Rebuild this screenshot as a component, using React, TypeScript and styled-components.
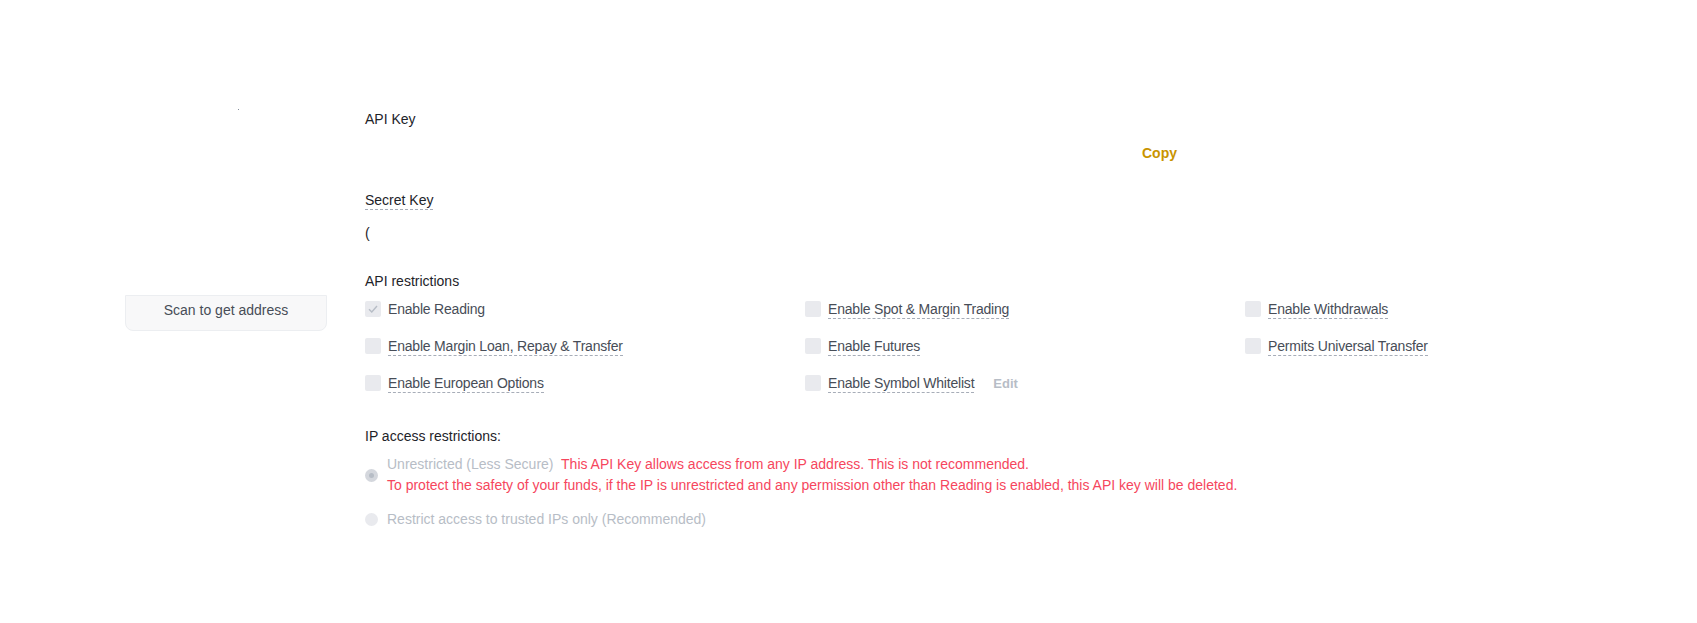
import styled, { createGlobalStyle } from "styled-components";

const GlobalStyle = createGlobalStyle`
    body {
        margin: 0;
        background: #ffffff;
        font-family: "Liberation Sans", Arial, sans-serif;
        color: #1E2329;
    }
`;

const Page = styled.div`
    display: flex;
    align-items: flex-start;
    gap: 38px;
    padding-left: 125px;
    width: 1697px;
    height: 623px;
    box-sizing: border-box;
`;

const Side = styled.aside`
    width: 202px;
    padding-top: 109px;
    display: flex;
    flex-direction: column;
    align-items: center;
`;

const QrDot = styled.div`
    width: 1px;
    height: 1px;
    background: #848E9C;
    margin-left: 24px;
`;

const ScanButton = styled.button`
    margin-top: 185px;
    width: 202px;
    height: 36px;
    padding: 0 0 6px;
    background: #F8F8F9;
    border: 1px solid #ECEEF1;
    border-radius: 0 0 8px 8px;
    color: #474D57;
    font-family: inherit;
    font-size: 14px;
    cursor: pointer;
`;

const Main = styled.main`
    padding-top: 109px;
    display: flex;
    flex-direction: column;
`;

const Label = styled.div<{ $top?: number }>`
    font-size: 14px;
    line-height: 20px;
    color: #1E2329;
    margin-top: ${(p) => p.$top ?? 0}px;
`;

const DashedLabel = styled.span`
    display: inline-block;
    line-height: 18px;
    border-bottom: 1px dashed #A7ADB8;
`;

const KeyRow = styled.div`
    width: 812px;
    height: 24px;
    margin-top: 12px;
    display: flex;
    align-items: center;
    justify-content: space-between;
`;

const KeyValue = styled.div`
    font-size: 14px;
    color: #1E2329;
`;

const CopyButton = styled.button`
    background: none;
    border: none;
    padding: 0;
    color: #C99400;
    font-family: inherit;
    font-size: 14px;
    font-weight: 600;
    cursor: pointer;
`;

const SecretValue = styled.div`
    font-size: 14px;
    line-height: 20px;
    margin-top: 13px;
    color: #1E2329;
`;

const PermGrid = styled.div`
    margin-top: 8px;
    display: grid;
    grid-template-columns: repeat(3, 440px);
    grid-auto-rows: 20px;
    row-gap: 17px;
`;

const Perm = styled.label`
    display: flex;
    align-items: center;
    gap: 7px;
    font-size: 14px;
    color: #474D57;
`;

const Box = styled.span`
    width: 16px;
    height: 16px;
    border-radius: 2px;
    background: #E9EAEE;
    display: flex;
    align-items: center;
    justify-content: center;
    flex-shrink: 0;
`;

const PermText = styled.span<{ $dashed?: boolean }>`
    display: inline-block;
    line-height: 18px;
    letter-spacing: -0.2px;
    border-bottom: 1px dashed ${(p) => (p.$dashed ? "#A7ADB8" : "transparent")};
`;

const Edit = styled.span`
    margin-left: 12px;
    color: #B7BDC6;
    font-size: 13px;
    font-weight: 600;
`;

const RadioRow = styled.div<{ $top: number }>`
    display: flex;
    align-items: center;
    gap: 9px;
    margin-top: ${(p) => p.$top}px;
`;

const Radio = styled.span<{ $selected?: boolean }>`
    width: 13px;
    height: 13px;
    border-radius: 50%;
    background: ${(p) => (p.$selected ? "#D4D7DD" : "#E9EAEE")};
    display: flex;
    align-items: center;
    justify-content: center;
    flex-shrink: 0;
    &::after {
        content: "";
        width: 5px;
        height: 5px;
        border-radius: 50%;
        background: ${(p) => (p.$selected ? "#B7BDC6" : "transparent")};
    }
`;

const RadioText = styled.div`
    font-size: 14px;
    line-height: 21px;
    color: #B7BDC6;
`;

const Warning = styled.span`
    color: #F6465D;
`;

const perms = [
    { text: "Enable Reading", checked: true },
    { text: "Enable Spot & Margin Trading", dashed: true },
    { text: "Enable Withdrawals", dashed: true },
    { text: "Enable Margin Loan, Repay & Transfer", dashed: true },
    { text: "Enable Futures", dashed: true },
    { text: "Permits Universal Transfer", dashed: true },
    { text: "Enable European Options", dashed: true },
    { text: "Enable Symbol Whitelist", dashed: true, edit: true },
];

function Check() {
    return (
        <svg width="10" height="8" viewBox="0 0 10 8" fill="none">
            <path d="M1 4.2L3.8 7L9 1" stroke="#B7BDC6" strokeWidth="1.4" />
        </svg>
    );
}

export default function App() {
    return (
        <>
            <GlobalStyle />
            <Page>
                <Side>
                    <QrDot />
                    <ScanButton>Scan to get address</ScanButton>
                </Side>
                <Main>
                    <Label>API Key</Label>
                    <KeyRow>
                        <KeyValue></KeyValue>
                        <CopyButton>Copy</CopyButton>
                    </KeyRow>
                    <Label $top={25}>
                        <DashedLabel>Secret Key</DashedLabel>
                    </Label>
                    <SecretValue>(</SecretValue>
                    <Label $top={28}>API restrictions</Label>
                    <PermGrid>
                        {perms.map((p) => (
                            <Perm key={p.text}>
                                <Box>{p.checked && <Check />}</Box>
                                <PermText $dashed={p.dashed}>{p.text}</PermText>
                                {p.edit && <Edit>Edit</Edit>}
                            </Perm>
                        ))}
                    </PermGrid>
                    <Label $top={33}>IP access restrictions:</Label>
                    <RadioRow $top={8}>
                        <Radio $selected />
                        <RadioText>
                            Unrestricted (Less Secure)&nbsp;{" "}
                            <Warning>This API Key allows access from any IP address. This is not recommended.</Warning>
                            <br />
                            <Warning>
                                To protect the safety of your funds, if the IP is unrestricted and any permission other than Reading is enabled, this API key will be deleted.
                            </Warning>
                        </RadioText>
                    </RadioRow>
                    <RadioRow $top={13}>
                        <Radio />
                        <RadioText>Restrict access to trusted IPs only (Recommended)</RadioText>
                    </RadioRow>
                </Main>
            </Page>
        </>
    );
}
